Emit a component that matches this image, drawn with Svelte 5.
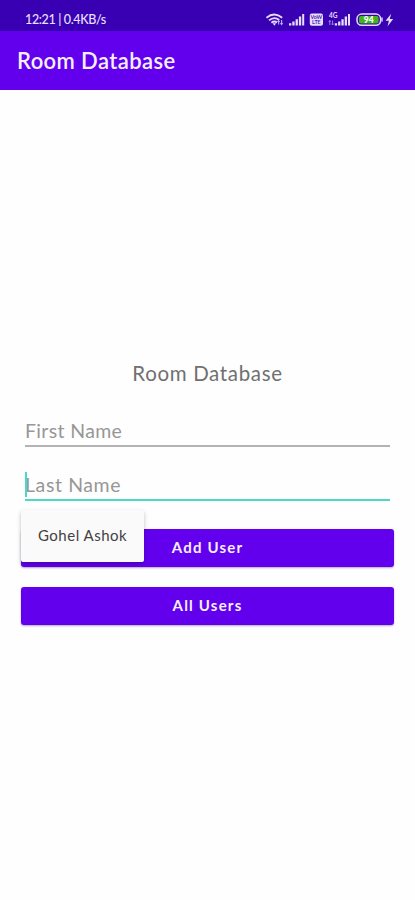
<script>
  let firstName = $state('');
  let lastName = $state('');
  const suggestion = 'Gohel Ashok';
</script>

<div class="screen">
  <div class="status">
    <span class="clock">12:21 | 0.4KB/s</span>
    <svg class="indicators" width="130" height="16" viewBox="0 0 130 16" aria-hidden="true">
      <g fill="none" stroke="#e6dcff" stroke-width="1.8">
        <path d="M.4 5.8Q8.3-.8 16.2 5.8" />
        <path d="M3 8.4Q8.3 4 13.2 8" />
        <path d="M5.4 10.7Q8.3 8.4 11 10.5" />
      </g>
      <path d="M6.6 11.2h3.6L8.4 13.7z" fill="#e6dcff" />
      <path d="M12.6 12.6V8.6M11.5 10l1.1-1.5 1.1 1.5M15.6 8v4.4M14.5 11l1.1 1.5 1.1-1.5" fill="none" stroke="#bda9ef" stroke-width="1.1" />
      <g fill="#e6dcff">
        <path d="M23 11.2h2.3v2.3H23zM26.3 9.6h2.3v3.9h-2.3zM29.6 7.2h2.3v6.3h-2.3zM32.9 4.6h2.3v8.9h-2.3zM36.2 2h2v11.5h-2z" />
        <rect x="43.8" y="1.5" width="13.2" height="12.3" rx="2" />
        <path d="M68.8 11.2h2.3v2.3h-2.3zM72.1 9.6h2.3v3.9h-2.3zM75.4 7.2h2.3v6.3h-2.3zM78.7 4.6H81v8.9h-2.3zM82 2h2v11.5h-2z" />
        <path d="M125.2 1.7l-5.6 7h3.3l-1.3 5.6 5.6-7.3h-3.5z" />
      </g>
      <text x="50.4" y="6.9" class="tiny dark" text-anchor="middle">VoW</text>
      <text x="50.4" y="12.3" class="tiny dark" text-anchor="middle">LTE</text>
      <text x="63" y="6" class="net">4G</text>
      <path d="M63.8 13V8.6M62.8 9.8l1-1.4 1 1.4M66.6 8.6V13M65.6 11.7l1 1.3 1-1.3" fill="none" stroke="#9b82df" />
      <rect x="91" y="2.1" width="23.6" height="11.2" rx="4.8" fill="none" stroke="#e6dcff" stroke-width="1.5" />
      <rect x="93" y="4" width="19.6" height="7.4" rx="2" fill="#42b51d" />
      <path d="M116 5.6v4" stroke="#e6dcff" stroke-width="1.4" />
      <text x="102.8" y="10.8" class="charge" text-anchor="middle">94</text>
    </svg>
  </div>
  <header>Room Database</header>

  <main>
    <h1>Room Database</h1>
    <label class="field first">
      <input aria-label="First Name" placeholder="First Name" bind:value={firstName} />
    </label>
    <label class="field last">
      <input aria-label="Last Name" placeholder="Last Name" bind:value={lastName} />
      <span class="cursor"></span>
    </label>
    <div class="actions">
      <button class="add">Add User</button>
      <button class="all">All Users</button>
      <div class="suggestions"><span>{suggestion}</span></div>
    </div>
  </main>
</div>

<style>
  :global(body) {
    margin: 0;
    background: #fefefe;
  }
  .screen {
    width: 415px;
    height: 900px;
    overflow: hidden;
    display: flex;
    flex-direction: column;
    background: #fefefe;
    font-family: Lato, 'Open Sans', sans-serif;
  }
  .status {
    height: 31px;
    box-sizing: border-box;
    flex: none;
    display: flex;
    justify-content: space-between;
    align-items: flex-start;
    padding: 12px 19px 0 25px;
    background: #3900b3;
    color: #e9e0ff;
  }
  .clock {
    font-size: 12.5px;
    line-height: 16px;
    font-weight: 500;
    letter-spacing: -0.35px;
    white-space: nowrap;
  }
  .indicators {
    display: block;
  }
  .tiny {
    font: 700 5.4px Lato, sans-serif;
    fill: #4a24ad;
  }
  .net {
    font: 700 6.5px Lato, sans-serif;
    fill: #e6dcff;
  }
  .charge {
    font: 900 8.5px Lato, sans-serif;
    fill: #fff;
  }
  header {
    height: 59px;
    flex: none;
    box-sizing: border-box;
    padding-left: 17px;
    background: #6200ee;
    color: #f5efff;
    font-size: 22px;
    font-weight: 600;
    line-height: 60px;
    letter-spacing: 0.4px;
  }
  main {
    flex: 1;
    display: flex;
    flex-direction: column;
    padding: 268px 21px 0;
  }
  h1 {
    margin: 0;
    height: 30px;
    text-align: center;
    font-size: 20.5px;
    font-weight: 400;
    line-height: 30px;
    letter-spacing: 0.65px;
    color: #707070;
  }
  .field {
    display: block;
    position: relative;
    box-sizing: border-box;
    height: 32px;
    margin: 0 4px;
    border-bottom: 2px solid #b3b3b3;
  }
  .first {
    margin-top: 27px;
  }
  .last {
    margin-top: 22px;
    border-color: #4ad9c4;
  }
  input {
    display: block;
    width: 100%;
    height: 30px;
    padding: 0;
    border: 0;
    outline: 0;
    background: transparent;
    font: 400 19.5px Lato, sans-serif;
    letter-spacing: 0.35px;
    color: #555;
  }
  .last input {
    letter-spacing: 0.6px;
  }
  input::placeholder {
    color: #979797;
    opacity: 1;
  }
  .cursor {
    position: absolute;
    left: 0;
    top: 3px;
    width: 2px;
    height: 25px;
    background: #4ad9c4;
  }
  .actions {
    position: relative;
    display: flex;
    flex-direction: column;
    gap: 20px;
    margin-top: 28px;
  }
  button {
    width: 100%;
    height: 38px;
    padding: 0 0 2px;
    border: 0;
    border-radius: 3px;
    background: #6200ee;
    color: #f5efff;
    font: 700 15px Lato, sans-serif;
    letter-spacing: 1.2px;
    box-shadow: 0 1px 2px #4c239066;
  }
  .suggestions {
    position: absolute;
    left: 0;
    top: -19px;
    width: 123px;
    height: 52px;
    box-sizing: border-box;
    display: flex;
    align-items: center;
    padding: 0 0 2px 17px;
    border-radius: 2px;
    background: #fafafa;
    color: #414141;
    font-size: 15px;
    letter-spacing: 0.5px;
    box-shadow: 0 2px 4px #00000040;
    white-space: nowrap;
  }
</style>
